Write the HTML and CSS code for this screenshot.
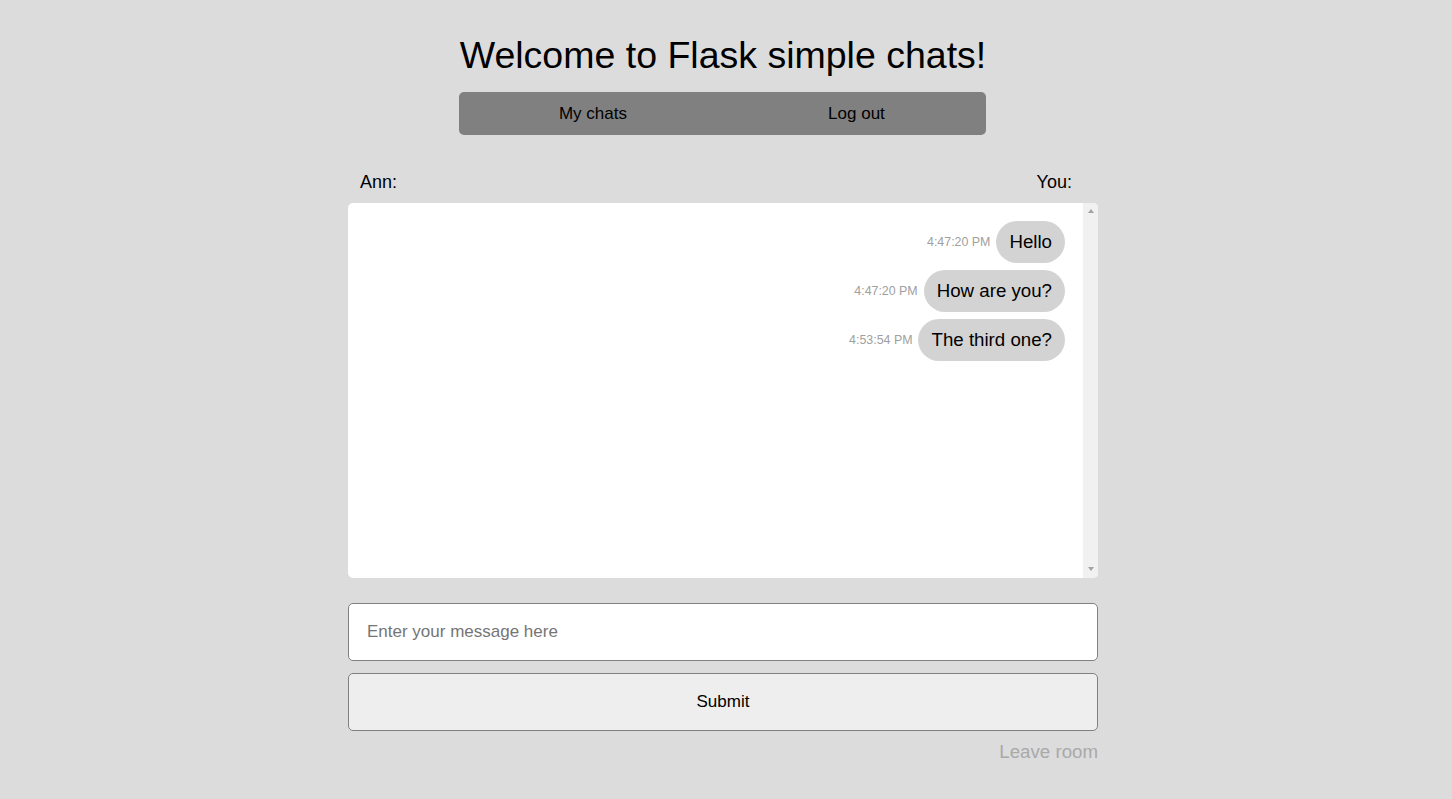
FILE: index.html
```html
<!DOCTYPE html>
<html lang="en">
<head>
<meta charset="utf-8">
<title>Flask simple chats</title>
<link rel="stylesheet" href="styles.css">
</head>
<body>
<header class="header">
  <div class="header-inner">
    <h1 class="title">Welcome to Flask simple chats!</h1>
    <nav class="nav">
      <a class="nav-link" href="#">My chats</a>
      <a class="nav-link" href="#">Log out</a>
    </nav>
  </div>
</header>
<main class="room">
  <div class="names">
    <span class="name">Ann:</span>
    <span class="name">You:</span>
  </div>
  <div class="chat">
    <div class="messages">
      <div class="msg-row">
        <span class="time">4:47:20 PM</span>
        <span class="bubble">Hello</span>
      </div>
      <div class="msg-row">
        <span class="time">4:47:20 PM</span>
        <span class="bubble">How are you?</span>
      </div>
      <div class="msg-row">
        <span class="time">4:53:54 PM</span>
        <span class="bubble">The third one?</span>
      </div>
    </div>
    <div class="scrollbar" aria-hidden="true">
      <span class="arrow arrow-up"></span>
      <span class="arrow arrow-down"></span>
    </div>
  </div>
  <form class="form">
    <input class="input" type="text" placeholder="Enter your message here">
    <button class="submit" type="button">Submit</button>
  </form>
  <div class="leave-row"><a class="leave" href="#">Leave room</a></div>
</main>
</body>
</html>
```

FILE: styles.css
```css
html, body {
  margin: 0;
  padding: 0;
}
body {
  background: #dcdcdc;
  font-family: "Liberation Sans", Arial, sans-serif;
  color: #000;
  padding-right: 6px;
}
.header {
  display: flex;
  justify-content: center;
  padding-top: 34px;
}
.header-inner {
  display: flex;
  flex-direction: column;
  width: fit-content;
}
.title {
  margin: 0;
  font-size: 37.5px;
  font-weight: normal;
  line-height: 43px;
  white-space: nowrap;
}
.nav {
  margin-top: 15px;
  margin-left: -1px;
  height: 43px;
  background: #808080;
  border-radius: 5px;
  display: flex;
  width: 527px;
}
.nav-link {
  flex: 1;
  display: flex;
  align-items: center;
  justify-content: center;
  padding-left: 5px;
  color: #000;
  text-decoration: none;
  font-size: 17px;
}
.room {
  width: 750px;
  margin: 0 auto;
  display: flex;
  flex-direction: column;
}
.names {
  display: flex;
  justify-content: space-between;
  padding: 0 26px 0 12px;
  margin-top: 37px;
  font-size: 18px;
  line-height: 21px;
}
.chat {
  margin-top: 10px;
  height: 375px;
  background: #fff;
  border-radius: 5px;
  overflow: hidden;
  display: flex;
}
.messages {
  flex: 1;
  padding: 18px 18px;
  display: flex;
  flex-direction: column;
  align-items: flex-end;
  gap: 7px;
}
.scrollbar {
  width: 15px;
  background: #f1f1f1;
  display: flex;
  flex-direction: column;
  justify-content: space-between;
  align-items: center;
  padding: 6px 0 7px;
  box-sizing: border-box;
}
.arrow {
  width: 0;
  height: 0;
  border-left: 3.5px solid transparent;
  border-right: 3.5px solid transparent;
}
.arrow-up {
  border-bottom: 4px solid #a3a3a3;
}
.arrow-down {
  border-top: 4px solid #a3a3a3;
}
.msg-row {
  display: flex;
  align-items: center;
  gap: 6px;
}
.time {
  font-size: 12.4px;
  color: #a0a0a0;
}
.bubble {
  background: #d3d3d3;
  border-radius: 21px;
  padding: 0 13px;
  height: 42px;
  display: flex;
  align-items: center;
  font-size: 18.7px;
}
.form {
  margin: 25px 0 0;
  display: flex;
  flex-direction: column;
  gap: 12px;
}
.input {
  box-sizing: border-box;
  width: 100%;
  height: 58px;
  border: 1px solid #808080;
  border-radius: 5px;
  background: #fff;
  padding: 0 18px;
  font-family: "Liberation Sans", Arial, sans-serif;
  font-size: 17px;
  outline: none;
}
.input::placeholder {
  color: #757575;
}
.submit {
  box-sizing: border-box;
  width: 100%;
  height: 58px;
  border: 1px solid #808080;
  border-radius: 5px;
  background: #eeeeee;
  font-family: "Liberation Sans", Arial, sans-serif;
  font-size: 17px;
  color: #000;
}
.leave-row {
  display: flex;
  justify-content: flex-end;
  margin-top: 10px;
}
.leave {
  color: #a9a9a9;
  text-decoration: none;
  font-size: 18.7px;
  line-height: 22px;
}
```
